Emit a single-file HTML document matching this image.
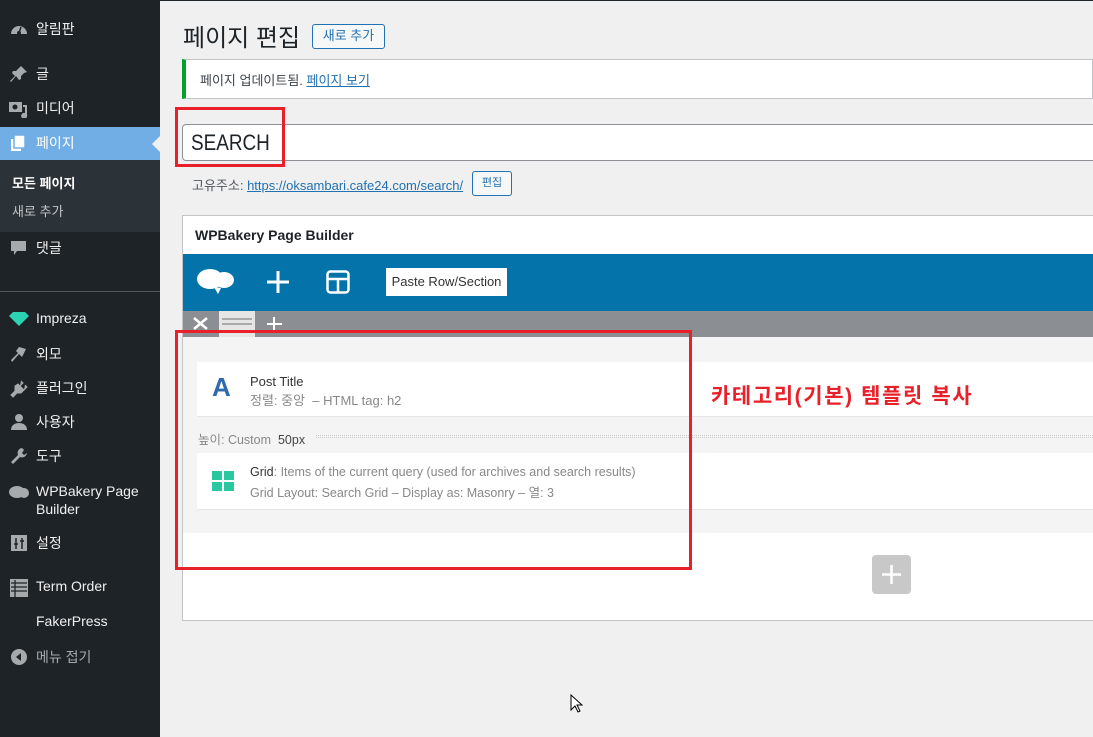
<!DOCTYPE html>
<html><head><meta charset="utf-8"><style>
*{box-sizing:border-box;margin:0;padding:0}
body{width:1093px;height:737px;overflow:hidden;background:#f0f0f1;font-family:"Liberation Sans","Noto Sans CJK KR",sans-serif;position:relative;font-size:13px;color:#1d2327}
.a{position:absolute}
#sb{left:0;top:0;width:160px;height:737px;background:#1d2327}
.mi{position:absolute;left:0;width:160px;color:#f0f0f1;font-size:14px}
.mi .t{position:absolute;left:36px}
.ic{position:absolute;left:9px;width:20px;height:20px}
</style></head><body>
<div class="a" style="left:0;top:0;width:1093px;height:1px;background:#1d2327"></div>
<div id="sb" class="a">
 <div class="mi" style="top:19px"><svg class="ic" viewBox="0 0 20 20"><path d="M2 15a8 8 0 0 1 16 0z" fill="#a7aaad"/><circle cx="10" cy="14" r="2" fill="#1d2327"/><path d="M10 14L12 8" stroke="#1d2327" stroke-width="1.5"/></svg><span class="t">알림판</span></div>
 <div class="mi" style="top:64px"><svg class="ic" viewBox="0 0 20 20"><path d="M12 2l6 6-3 1-3 3 0 3-2 1-3-4-5 6-1-1 5-5-3-3 1-2 3 0 3-3z" fill="#a7aaad"/></svg><span class="t">글</span></div>
 <div class="mi" style="top:98px"><svg class="ic" viewBox="0 0 20 20"><rect x="0" y="4" width="13" height="10" fill="#a7aaad"/><circle cx="6" cy="9" r="2.5" fill="#1d2327"/><path d="M14 7h4v10a3 3 0 1 1-2-2V9h-2z" fill="#a7aaad"/></svg><span class="t">미디어</span></div>
 <div class="a" style="top:127px;left:0;width:160px;height:33px;background:#72aee6"></div>
 <div class="a" style="top:136px;left:152px;width:0;height:0;border:8px solid transparent;border-right-color:#f0f0f1;border-left:0"></div>
 <div class="mi" style="top:133px"><svg class="ic" viewBox="0 0 20 20"><rect x="2" y="6" width="10" height="12" fill="#fff"/><rect x="5" y="2" width="11" height="13" fill="#fff" stroke="#72aee6" stroke-width="1.5"/></svg><span class="t" style="color:#fff">페이지</span></div>
 <div class="a" style="top:160px;left:0;width:160px;height:72px;background:#2c3338"></div>
 <div class="a" style="top:173px;left:12px;color:#fff;font-weight:bold;font-size:13px">모든 페이지</div>
 <div class="a" style="top:201px;left:12px;color:#c3c4c7;font-size:13px">새로 추가</div>
 <div class="mi" style="top:238px"><svg class="ic" viewBox="0 0 20 20"><path d="M2 3h15v10H8l-3 4v-4H2z" fill="#a7aaad"/></svg><span class="t">댓글</span></div>
 <div class="a" style="top:291px;left:0;width:160px;height:1px;background:#50575e"></div>
 <div class="mi" style="top:310px"><svg class="ic" viewBox="0 0 20 20"><path d="M0 6l4-4h12l4 4-10 10z" fill="#2bd3b3"/></svg><span class="t">Impreza</span></div>
 <div class="mi" style="top:344px"><svg class="ic" viewBox="0 0 20 20"><path d="M10 3l7 2-4 8-3-3-7 8-1-2 7-7-2-2z" fill="#a7aaad"/></svg><span class="t">외모</span></div>
 <div class="mi" style="top:378px"><svg class="ic" viewBox="0 0 20 20"><path d="M9 6l6 6-3 3H8l-4 4-2-2 4-4V8zM12 3l2 2-3 3M16 7l2 2-3 3" fill="#a7aaad" stroke="#a7aaad"/></svg><span class="t">플러그인</span></div>
 <div class="mi" style="top:412px"><svg class="ic" viewBox="0 0 20 20"><circle cx="10" cy="6" r="4" fill="#a7aaad"/><path d="M2 18c0-5 4-7 8-7s8 2 8 7z" fill="#a7aaad"/></svg><span class="t">사용자</span></div>
 <div class="mi" style="top:446px"><svg class="ic" viewBox="0 0 20 20"><path d="M13 2a5 5 0 0 0-4 7l-7 7 2 2 7-7a5 5 0 0 0 7-4l-3 2-2-2 2-3z" fill="#a7aaad"/></svg><span class="t">도구</span></div>
 <div class="mi" style="top:482px"><svg class="ic" viewBox="0 0 20 20"><ellipse cx="8" cy="10" rx="8" ry="6" fill="#a7aaad"/><ellipse cx="15" cy="11" rx="5" ry="5" fill="#a7aaad"/></svg><span class="t" style="line-height:18px">WPBakery Page<br>Builder</span></div>
 <div class="mi" style="top:533px"><svg class="ic" viewBox="0 0 20 20"><rect x="2" y="2" width="16" height="16" fill="#a7aaad"/><path d="M7 5v11M13 5v11M5 11h4M11 8h4" stroke="#1d2327" stroke-width="1.5"/></svg><span class="t">설정</span></div>
 <div class="mi" style="top:578px"><svg class="ic" viewBox="0 0 20 20"><rect x="1" y="1" width="18" height="18" fill="#a7aaad"/><path d="M2 5h16M2 9h16M2 13h16M6 2v17" stroke="#1d2327" stroke-width="1.3"/></svg><span class="t">Term Order</span></div>
 <div class="mi" style="top:613px"><span class="t">FakerPress</span></div>
 <div class="mi" style="top:647px;color:#a7aaad"><svg class="ic" viewBox="0 0 20 20"><circle cx="10" cy="10" r="8" fill="#a7aaad"/><path d="M12 6v8l-5-4z" fill="#1d2327"/></svg><span class="t">메뉴 접기</span></div>
</div>

<div class="a" style="left:183px;top:18px;font-size:24px;color:#1d2327">페이지 편집</div>
<div class="a" style="left:312px;top:24px;width:73px;height:25px;border:1px solid #2271b1;border-radius:3px;background:#f6f7f7;color:#2271b1;font-size:13px;text-align:center;line-height:22px">새로 추가</div>
<div class="a" style="left:182px;top:59px;width:911px;height:40px;background:#fff;border:1px solid #c3c4c7;border-left:4px solid #00a32a"></div>
<div class="a" style="left:200px;top:70px;font-size:13px;color:#3c434a">페이지 업데이트됨. <span style="color:#2271b1;text-decoration:underline">페이지 보기</span></div>
<div class="a" style="left:182px;top:124px;width:915px;height:37px;background:#fff;border:1px solid #8c8f94;border-radius:4px"></div>
<div class="a" style="left:191px;top:130px;font-size:22px;color:#1d2327;transform:scaleX(0.86);transform-origin:0 0">SEARCH</div>
<div class="a" style="left:175px;top:107px;width:110px;height:60px;border:3px solid #e8202a"></div>
<div class="a" style="left:192px;top:175px;font-size:13px;color:#50575e">고유주소: <span style="color:#2271b1;text-decoration:underline">https://oksambari.cafe24.com/search/</span></div>
<div class="a" style="left:472px;top:171px;width:40px;height:25px;border:1px solid #2271b1;border-radius:3px;background:#f6f7f7;color:#2271b1;font-size:11px;text-align:center;line-height:23px">편집</div>

<div class="a" style="left:182px;top:215px;width:915px;height:406px;background:#fff;border:1px solid #c3c4c7"></div>
<div class="a" style="left:195px;top:227px;font-size:14px;font-weight:bold;color:#1d2327">WPBakery Page Builder</div>
<div class="a" style="left:183px;top:254px;width:910px;height:57px;background:#0473aa"></div>
<svg class="a" style="left:196px;top:265px" width="40" height="32" viewBox="0 0 40 32"><ellipse cx="14" cy="14" rx="13" ry="10" fill="#fff"/><ellipse cx="28" cy="15" rx="10" ry="8" fill="#fff"/><path d="M18 22l4 7 3-6z" fill="#fff"/></svg>
<svg class="a" style="left:266px;top:270px" width="24" height="24"><path d="M12 1v22M1 12h22" stroke="#fff" stroke-width="3"/></svg>
<svg class="a" style="left:326px;top:270px" width="24" height="24"><rect x="1.5" y="1.5" width="21" height="21" rx="3" fill="none" stroke="#fff" stroke-width="2.5"/><path d="M2 9h20M12 9v14" stroke="#fff" stroke-width="2.5"/></svg>
<div class="a" style="left:386px;top:268px;width:121px;height:28px;background:#fff;color:#333;font-size:13px;line-height:28px;text-align:center">Paste Row/Section</div>
<div class="a" style="left:183px;top:311px;width:910px;height:26px;background:#8b8e92"></div>
<svg class="a" style="left:193px;top:317px" width="15" height="13"><path d="M1 1l13 11M14 1L1 12" stroke="#fff" stroke-width="2.5"/></svg>
<div class="a" style="left:219px;top:311px;width:36px;height:26px;background:#e6e6e6"></div>
<div class="a" style="left:222px;top:318px;width:30px;height:2px;background:#aaa"></div>
<div class="a" style="left:222px;top:323px;width:30px;height:2px;background:#aaa"></div>
<svg class="a" style="left:266px;top:316px" width="16" height="16"><path d="M8 1v15M1 8h15" stroke="#fff" stroke-width="2"/></svg>
<div class="a" style="left:183px;top:337px;width:910px;height:196px;background:#f4f4f4"></div>
<div class="a" style="left:197px;top:362px;width:896px;height:55px;background:#fff;border-bottom:1px solid #e6e6e6"></div>
<div class="a" style="left:212px;top:372px;font-size:26px;font-weight:bold;color:#2e6aad;font-family:'Liberation Sans',sans-serif">A</div>
<div class="a" style="left:250px;top:374px;font-size:13px;color:#333">Post Title</div>
<div class="a" style="left:250px;top:390px;font-size:13px;color:#888">정렬: 중앙 &nbsp;– HTML tag: h2</div>
<div class="a" style="left:198px;top:429px;font-size:12.5px;color:#888">높이: Custom &nbsp;<span style="color:#444">50px</span></div>
<div class="a" style="left:316px;top:435px;width:777px;height:3px;border-top:1px dotted #ccc;border-bottom:1px dotted #ccc"></div>
<div class="a" style="left:197px;top:453px;width:896px;height:57px;background:#fff;border-bottom:1px solid #e6e6e6"></div>
<svg class="a" style="left:212px;top:471px" width="23" height="20"><rect x="0" y="0" width="10" height="9" fill="#2ac8a0"/><rect x="12" y="0" width="10" height="9" fill="#2ac8a0"/><rect x="0" y="11" width="10" height="9" fill="#2ac8a0"/><rect x="12" y="11" width="10" height="9" fill="#2ac8a0"/></svg>
<div class="a" style="left:250px;top:465px;font-size:12.5px;color:#888"><span style="color:#333">Grid</span>: Items of the current query (used for archives and search results)</div>
<div class="a" style="left:250px;top:482px;font-size:12.5px;color:#888">Grid Layout: Search Grid – Display as: Masonry – 열: 3</div>
<div class="a" style="left:872px;top:555px;width:39px;height:39px;background:#c8c8c8;border-radius:4px"></div>
<svg class="a" style="left:881px;top:564px" width="21" height="21"><path d="M10.5 1v19M1 10.5h19" stroke="#fff" stroke-width="2.5"/></svg>
<div class="a" style="left:175px;top:330px;width:517px;height:240px;border:3px solid #e8202a"></div>
<div class="a" style="left:711px;top:380px;font-size:21px;font-weight:bold;color:#e8202a;letter-spacing:1.6px">카테고리(기본) 템플릿 복사</div>
<svg class="a" style="left:570px;top:694px" width="13" height="20"><path d="M1 1v15l4-4 3 6 2-1-3-6h5z" fill="#fff" stroke="#000"/></svg>
</body></html>
